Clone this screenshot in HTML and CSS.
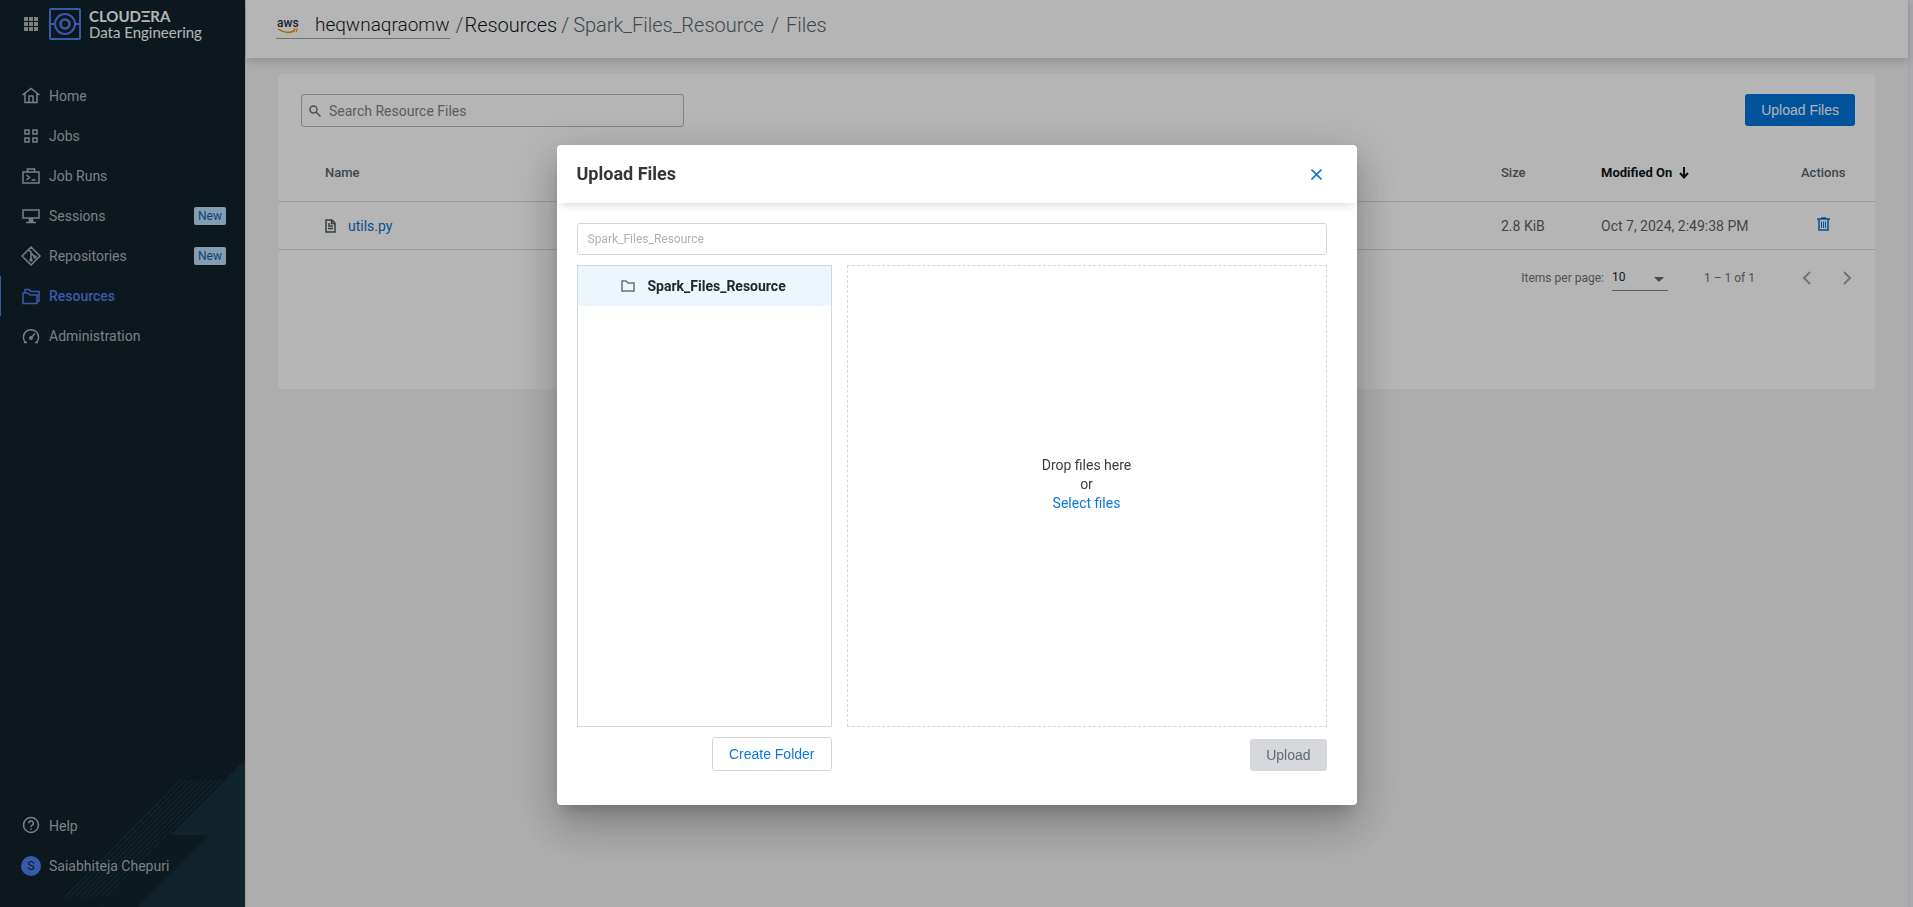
FILE: index.html
```html
<!DOCTYPE html>
<html lang="en">
<head>
<meta charset="utf-8">
<title>Cloudera Data Engineering</title>
<link rel="stylesheet" href="styles.css">
</head>
<body>
<div class="app">
  <aside class="sidebar">
    <svg class="sidebar-art" viewBox="0 0 245 147" aria-hidden="true">
      <path class="art-band" d="M170 75H210L138 147H98Z"/>
      <path class="art-fill" d="M245 0L170 75H210L138 147H245Z"/>
      <g class="art-lines">
        <path d="M181 20L65 137M186 20L70 137M191 20L75 137M196 20L80 137M201 20L85 137M206 20L90 137M211 20L95 137M216 20L100 137M221 20L105 137"/>
      </g>
    </svg>
    <div class="brand">
      <button class="apps" aria-label="Applications">
        <svg width="14" height="14" viewBox="0 0 14 14"><path fill="#b0b4b6" d="M0 0h4v4H0zM5 0h4v4H5zM10 0h4v4h-4zM0 5h4v4H0zM5 5h4v4H5zM10 5h4v4h-4zM0 10h4v4H0zM5 10h4v4H5zM10 10h4v4h-4z"/></svg>
      </button>
      <svg class="brand-mark" width="32" height="32" viewBox="0 0 32 32" fill="none" stroke="#4f7ff0" stroke-width="2"><rect x="1" y="1" width="30" height="30" rx="1"/><circle cx="16" cy="16" r="10"/><circle cx="16" cy="16" r="4.5" stroke-width="2.6"/><path d="M1 16h5M26 16h5"/></svg>
      <div class="brand-text"><span class="brand-name">CLOUDΞRA</span><span class="brand-product">Data Engineering</span></div>
    </div>
    <nav class="nav">
      <a class="nav-item" href="#"><svg class="icon" viewBox="0 0 20 20"><path d="M1.500 9L10 2.500L18.500 9M4 7.500V16.500H16V7.500M8 16.500V10H12V16.500"/></svg><span>Home</span></a>
      <a class="nav-item" href="#"><svg class="icon" viewBox="0 0 20 20"><path d="M4 4h4v4H4zM12 4h4v4h-4zM4 12h4v4H4zM12 12h4v4h-4z"/></svg><span>Jobs</span></a>
      <a class="nav-item" href="#"><svg class="icon" viewBox="0 0 20 20"><path d="M2 6h16v11H2zM6.500 6V3h7v3M5.500 9l3 2.500l-3 2.500M10.500 14h4"/></svg><span>Job Runs</span></a>
      <a class="nav-item" href="#"><svg class="icon" viewBox="0 0 20 20"><path d="M2 4h16v8H2zM10 12v4M5 16.500h10" /><path d="M8.500 13h3v3h-3z"/></svg><span>Sessions</span><span class="badge">New</span></a>
      <a class="nav-item" href="#"><svg class="icon" viewBox="0 0 20 20"><path d="M10 1L19 10L10 19L1 10ZM7.500 3.500L10 6V14M10 7l4 4"/><circle cx="10" cy="14" r="1"/><circle cx="14" cy="11" r="1"/></svg><span>Repositories</span><span class="badge">New</span></a>
      <a class="nav-item active" href="#"><svg class="icon" viewBox="0 0 20 20"><path d="M2 7h5l2 2h7v8.500H2zM4 7V3.500h4l2 2h8V15h-2"/></svg><span>Resources</span></a>
      <a class="nav-item" href="#"><svg class="icon" viewBox="0 0 20 20"><path d="M4.500 16.500A7.600 7.600 0 1 1 15.500 16.500M3 16.500h3M14 16.500h3M10 12l4-4.500"/><circle cx="10" cy="12" r="1.200"/></svg><span>Administration</span></a>
    </nav>
    <nav class="nav nav-bottom">
      <a class="nav-item" href="#"><svg class="icon" viewBox="0 0 20 20"><circle cx="10" cy="9" r="7.500"/><path d="M7.700 7.300A2.300 2.300 0 1 1 11 9.300Q10 9.900 10 11M10 12.300v1.500"/></svg><span>Help</span></a>
      <a class="nav-item" href="#"><span class="avatar">S</span><span>Saiabhiteja Chepuri</span></a>
    </nav>
  </aside>
  <div class="page">
    <header class="topbar">
      <a class="service" href="#">
        <svg width="24" height="20" viewBox="0 0 24 20" aria-hidden="true"><text x="0" y="12" class="aws-text">aws</text><path d="M1 14Q10 20 18 15.500" fill="none" stroke="#f79400" stroke-width="1.500"/><path d="M16 14h4.500l-1.500 3.500" fill="none" stroke="#f79400"/></svg>
        <span>heqwnaqraomw</span>
      </a>
      <nav class="crumbs"><span>/</span><a class="crumb-dark" href="#">Resources</a><span class="sep">/</span><a href="#">Spark_Files_Resource</a><span class="sep wide">/</span><span class="last">Files</span></nav>
    </header>
    <main class="card">
      <div class="toolbar">
        <label class="search">
          <svg width="12" height="12" viewBox="0 0 12 12" fill="none" stroke="#687379" stroke-width="1.500"><circle cx="4.500" cy="4.500" r="3.500"/><path d="M7 7l4.500 4.500"/></svg>
          <input type="text" placeholder="Search Resource Files" aria-label="Search Resource Files">
        </label>
        <button class="btn primary">Upload Files</button>
      </div>
      <table class="files">
        <colgroup><col><col class="col-size"><col class="col-date"><col class="col-actions"></colgroup>
        <thead><tr><th>Name</th><th>Size</th><th class="sorted"><span class="sort">Modified On <svg width="10" height="12" viewBox="0 0 10 12" fill="none" stroke="#10181c" stroke-width="2"><path d="M5 0v10M1 6l4 4.500L9 6"/></svg></span></th><th>Actions</th></tr></thead>
        <tbody><tr>
          <td><span class="file"><svg width="11" height="14" viewBox="0 0 11 14" fill="none" stroke="#4f5b62" stroke-width="1.500"><path d="M1 1h6l3 3v9H1zM6.500 1v3.500H10M3 7h5M3 9.500h5M3 5h2"/></svg><a href="#">utils.py</a></span></td>
          <td>2.8 KiB</td><td>Oct 7, 2024, 2:49:38 PM</td>
          <td><button class="icon-btn trash" aria-label="Delete"><svg width="13" height="14" viewBox="0 0 13 14" fill="none" stroke="#0a70d1" stroke-width="1.500"><path d="M0 2h13M4 1h5M2 2.500v10.500h9V2.500"/><path d="M4.500 4.500v6.500M6.500 4.500v6.500M8.500 4.500v6.500" stroke-width="1"/></svg></button></td>
        </tr></tbody>
      </table>
      <div class="pager">
        <label for="per-page">Items per page:</label>
        <span class="select-wrap"><select id="per-page"><option>10</option></select></span>
        <span class="range">1 – 1 of 1</span>
        <span class="arrows">
          <button class="icon-btn" aria-label="Previous page"><svg width="8" height="14" viewBox="0 0 8 14" fill="none" stroke="#a3a3a3" stroke-width="2"><path d="M7 1L1 7l6 6"/></svg></button>
          <button class="icon-btn" aria-label="Next page"><svg width="8" height="14" viewBox="0 0 8 14" fill="none" stroke="#a3a3a3" stroke-width="2"><path d="M1 1l6 6l-6 6"/></svg></button>
        </span>
      </div>
    </main>
  </div>
</div>
<div class="backdrop">
  <section class="dialog" role="dialog" aria-modal="true" aria-labelledby="dialog-title">
    <header class="dialog-head">
      <h2 id="dialog-title">Upload Files</h2>
      <button class="icon-btn" aria-label="Close"><svg width="11" height="11" viewBox="0 0 11 11" fill="none" stroke="#0a77d9" stroke-width="1.600"><path d="M.500.500l10 10M10.500.500l-10 10"/></svg></button>
    </header>
    <div class="dialog-body">
      <input class="path" type="text" placeholder="Spark_Files_Resource" aria-label="Folder path" disabled>
      <div class="panes">
        <div class="tree">
          <button class="tree-item"><svg width="14" height="12" viewBox="0 0 14 12" fill="none" stroke="#68747b" stroke-width="1.500"><path d="M1 1h4l2 2h6v8H1z"/></svg>Spark_Files_Resource</button>
        </div>
        <div class="drop"><span>Drop files here</span><span>or</span><a href="#">Select files</a></div>
      </div>
      <div class="dialog-actions">
        <div class="tree-actions"><button class="btn outline">Create Folder</button></div>
        <button class="btn disabled" disabled>Upload</button>
      </div>
    </div>
  </section>
</div>
</body>
</html>
```
FILE: styles.css
```css
* { box-sizing: border-box; }
body { margin: 0; font: 14px/20px Roboto, sans-serif; color: #5a656d; background: #eff0f4; }
a { color: inherit; text-decoration: none; }
button, input, select { font: inherit; }
button { cursor: pointer; }
svg { display: block; flex: none; }

.app { display: flex; min-height: 100vh; }

.sidebar { position: relative; display: flex; flex-direction: column; width: 245px; flex: none; background: #112229; color: #b0b4b8; overflow: hidden; }
.sidebar-art { position: absolute; right: 0; bottom: 0; width: 245px; height: 147px; }
.art-band { fill: #13272f; }
.art-fill { fill: #19333e; }
.art-lines { fill: none; stroke: #19333e; stroke-width: 1.500; }
.brand { display: flex; align-items: center; height: 48px; padding-left: 24px; }
.apps { padding: 0; border: 0; background: none; }
.brand-mark { margin-left: 11px; }
.brand-text { display: flex; flex-direction: column; margin-left: 8px; color: #fff; font-family: Lato, sans-serif; font-size: 15px; line-height: 16px; }
.brand-name { font-weight: 700; }
.nav { position: relative; margin-top: 28px; }
.nav-bottom { margin-top: auto; margin-bottom: 21px; }
.nav-item { display: flex; align-items: center; height: 40px; padding: 0 19px 0 21px; }
.nav-item > .icon, .nav-item > .avatar { width: 20px; height: 20px; margin-right: 8px; }
.icon { fill: none; stroke: currentColor; stroke-width: 1.500; }
.nav-item.active { color: #4f7ff0; font-weight: 500; box-shadow: inset 1px 0 #4f7ff0; }
.badge { margin-left: auto; padding: 0 4px; border-radius: 2px; background: #b9dcfa; color: #0b62ad; font-size: 12px; line-height: 18px; }
.avatar { border-radius: 50%; background: #4f7ff0; color: #112229; text-align: center; font-size: 12px; }

.page { flex: 1; min-width: 0; margin-right: 4px; border-left: 1px solid #dcdcdc; border-right: 1px solid #e6e8ec; background: #f4f4f4; }
.topbar { display: flex; align-items: flex-start; height: 58px; padding: 12px 30px; background: #fff; box-shadow: 0 3px 8px rgba(70, 80, 110, .25); font-size: 20px; font-weight: 300; line-height: 26px; color: #5a656d; }
.service { display: flex; align-items: center; gap: 14px; padding: 0 1px; border-bottom: 1px solid #a3a3a3; color: #10181c; font-size: 19px; }
.aws-text { font: 500 12px Roboto, sans-serif; fill: #252f3e; }
.crumbs { display: flex; margin-left: 5px; }
.crumbs span:first-child { margin-right: 1px; }
.crumb-dark { color: #10181c; }
.sep { margin: 0 4px; }
.sep.wide { margin: 0 7px; }

.card { min-height: 315px; margin: 16px 33px 0 32px; border-radius: 4px; background: #fff; }
.toolbar { display: flex; justify-content: space-between; align-items: flex-start; padding: 20px 20px 0 23px; }
.search { display: flex; align-items: center; gap: 8px; width: 383px; height: 33px; padding: 0 7px; border: 1px solid #b5b8ba; border-radius: 3px; }
.search input { flex: 1; min-width: 0; padding: 0; border: 0; outline: 0; background: none; }
.search input::placeholder { color: #7a858c; opacity: 1; }
.btn { height: 32px; padding: 0 15px; border: 1px solid transparent; border-radius: 3px; font-family: "Liberation Sans", Arial, sans-serif; }
.primary { background: #0074d9; color: #fff; }
.files { width: 100%; margin-top: 18px; border-collapse: collapse; table-layout: fixed; }
.files th, .files td { padding: 0; text-align: left; border-bottom: 1px solid #dcdcdc; }
.files th { height: 56px; padding-top: 1px; font-size: 13px; font-weight: 500; }
.files td { height: 48px; padding-top: 1px; }
.files th:first-child, .files td:first-child { padding-left: 47px; }
.col-size { width: 100px; }
.col-date { width: 200px; }
.col-actions { width: 74px; }
.files .sorted { color: #10181c; font-weight: 700; }
.sort { display: flex; align-items: center; gap: 7px; }
.file { display: flex; align-items: center; gap: 12px; }
.file a { color: #0a70d1; }
.icon-btn { padding: 0; border: 0; background: none; }
.trash { margin-left: 16px; }
.pager { display: flex; align-items: center; height: 56px; padding-right: 24px; justify-content: flex-end; font-size: 12px; color: #737373; }
.select-wrap { position: relative; margin-left: 8px; }
.select-wrap::after { content: ""; position: absolute; right: 4px; top: 12px; border: 5px solid transparent; border-top-color: #6b6b6b; border-bottom: 0; pointer-events: none; }
.select-wrap select { appearance: none; width: 56px; height: 26px; padding: 0; border: 0; border-bottom: 1px solid #8a8a8a; border-radius: 0; background: none; color: #222; }
.range { margin-left: 36px; }
.arrows { display: flex; gap: 32px; margin-left: 48px; }

.backdrop { position: fixed; inset: 0; display: flex; align-items: flex-start; justify-content: center; padding-top: 16vh; background: rgba(0, 0, 0, .29); }
.dialog { width: 800px; max-width: 80vw; border-radius: 4px; background: #fff; box-shadow: 0 11px 15px -7px rgba(0, 0, 0, .2), 0 24px 38px 3px rgba(0, 0, 0, .14), 0 9px 46px 8px rgba(0, 0, 0, .12); }
.dialog-head { display: flex; align-items: center; justify-content: space-between; height: 58px; padding: 0 35px 0 20px; box-shadow: 0 6px 8px -4px rgba(0, 0, 0, .15); }
.dialog-head h2 { margin: 0; font-size: 18px; font-weight: 700; color: #363636; }
.dialog-body { padding: 20px 30px 34px 20px; }
.path { display: block; width: 100%; height: 32px; padding: 0 10px; border: 1px solid #d5d7d9; border-radius: 3px; background: #fff; font-size: 12px; }
.path::placeholder { color: #b0b0b0; opacity: 1; }
.panes { display: flex; gap: 15px; height: 462px; margin-top: 10px; }
.tree { width: 255px; border: 1px solid #d2d7dc; }
.tree-item { display: flex; align-items: center; gap: 13px; width: 100%; height: 40px; padding: 0 0 0 43px; border: 0; background: #ebf6ff; color: #222629; font-weight: 700; }
.drop { flex: 1; display: flex; flex-direction: column; align-items: center; justify-content: center; border: 1px dashed #d5d5d5; color: #3c3c3c; line-height: 19px; padding-bottom: 24px; }
.drop a { color: #0a77d9; }
.dialog-actions { display: flex; align-items: flex-end; justify-content: space-between; margin-top: 10px; }
.tree-actions { display: flex; justify-content: flex-end; width: 255px; }
.btn.outline { height: 34px; padding: 0 16px; border-color: #d2d5d8; background: #fff; color: #0a77d9; }
.btn.disabled { background: #d6d8dc; color: #5f6a72; }
```
